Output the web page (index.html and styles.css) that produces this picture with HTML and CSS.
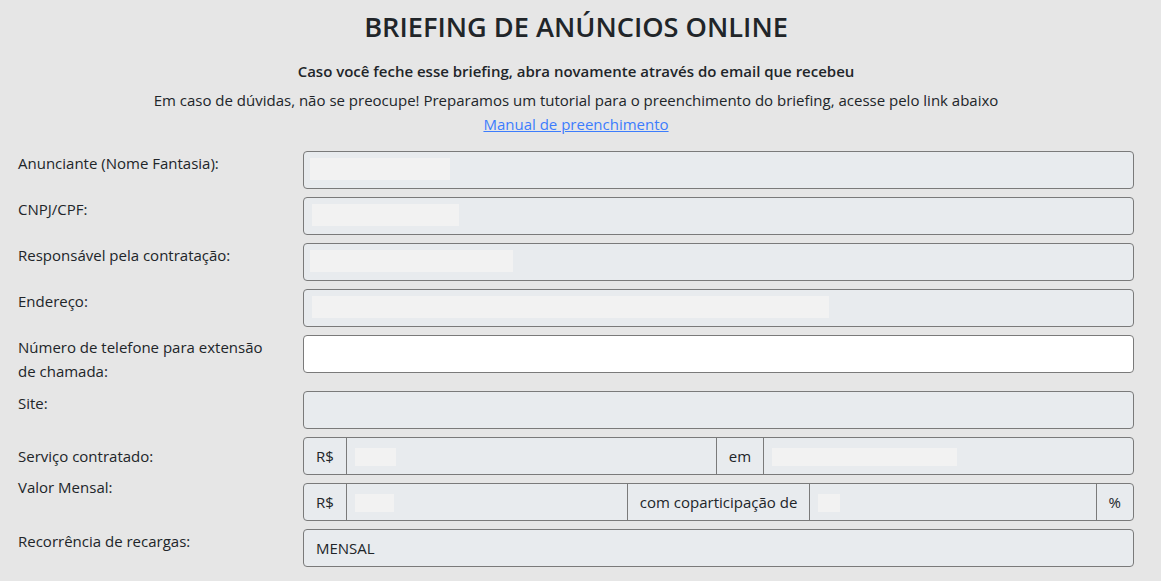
FILE: index.html
```html
<!DOCTYPE html>
<html lang="pt-BR">
<head>
  <meta charset="UTF-8" />
  <meta name="viewport" content="width=device-width, initial-scale=1.0"/>
  <title>Briefing de Anúncios Online</title>
  <link rel="stylesheet" href="styles.css">
</head>
<body>

<div class="page">
  <div class="intro">
    <h2>BRIEFING DE ANÚNCIOS ONLINE</h2>
    <p class="warn">Caso você feche esse briefing, abra novamente através do email que recebeu</p>
    <p class="help">Em caso de dúvidas, não se preocupe! Preparamos um tutorial para o preenchimento do briefing, acesse pelo link abaixo</p>
    <a href="#">Manual de preenchimento</a>
  </div>

  <div class="form">
    <label>Anunciante (Nome Fantasia):</label>
    <div class="field disabled"><span class="blur" style="width:140px"></span></div>

    <label>CNPJ/CPF:</label>
    <div class="field disabled"><span class="blur" style="width:147px;margin-left:2px"></span></div>

    <label>Responsável pela contratação:</label>
    <div class="field disabled"><span class="blur" style="width:203px"></span></div>

    <label>Endereço:</label>
    <div class="field disabled"><span class="blur" style="width:517px;margin-left:2px"></span></div>

    <label>Número de telefone para extensão de chamada:</label>
    <div class="field"></div>

    <label>Site:</label>
    <div class="field disabled"></div>

    <div class="labels">
      <label class="pad">Serviço contratado:</label>
      <label>Valor Mensal:</label>
    </div>
    <div class="groups">
      <div class="group">
        <span class="addon">R$</span>
        <div class="cell grow"><span class="blur" style="width:41px"></span></div>
        <span class="addon">em</span>
        <div class="cell grow"><span class="blur" style="width:185px"></span></div>
      </div>
      <div class="group">
        <span class="addon">R$</span>
        <div class="cell" style="width:281px"><span class="blur" style="width:39px"></span></div>
        <span class="addon">com coparticipação de</span>
        <div class="cell grow"><span class="blur" style="width:22px"></span></div>
        <span class="addon">%</span>
      </div>
    </div>

    <label>Recorrência de recargas:</label>
    <div class="field disabled text">MENSAL</div>
  </div>
</div>

</body>
</html>
```

FILE: styles.css
```css
body {
  margin: 0;
  background: #e6e6e6;
  color: #212529;
  font-family: "Open Sans", "Noto Sans", sans-serif;
  font-size: 15px;
  line-height: 24px;
}
.page {
  padding: 0 27px 0 18px;
}
.intro {
  text-align: center;
  margin-left: -12px;
  margin-right: -12px;
  padding-top: 8px;
}
h2 {
  margin: 0 0 13px;
  font-size: 27.2px;
  font-weight: 600;
  line-height: 38px;
  color: #212529;
}
.warn {
  margin: 0 0 5px;
  font-weight: 600;
  font-size: 15px;
}
.help {
  margin: 0;
}
a {
  color: #3d7dfd;
}
.form {
  display: grid;
  grid-template-columns: 261px 1fr;
  column-gap: 24px;
  row-gap: 8px;
  margin-top: 15px;
}
label {
  display: block;
}
.labels .pad {
  padding: 7px 0;
}
.field {
  height: 38px;
  box-sizing: border-box;
  border: 1px solid #7a7a7a;
  border-radius: 4px;
  background: #fff;
  padding: 6px 6px;
}
.field.disabled {
  background: #e8ebee;
}
.field.text {
  padding: 6px 12px;
}
.blur {
  display: block;
  height: 22px;
  background: #f2f2f2;
}
.groups {
  display: flex;
  flex-direction: column;
  gap: 8px;
}
.group {
  display: flex;
  height: 38px;
  box-sizing: border-box;
  border: 1px solid #7a7a7a;
  border-radius: 4px;
  background: #e8ebee;
}
.addon {
  padding: 6px 12px;
  white-space: nowrap;
  border-left: 1px solid #7a7a7a;
}
.addon:first-child {
  border-left: none;
}
.cell {
  border-left: 1px solid #7a7a7a;
  padding: 10px 8px;
  box-sizing: border-box;
}
.cell .blur {
  height: 18px;
}
.grow {
  flex: 1;
}
```
